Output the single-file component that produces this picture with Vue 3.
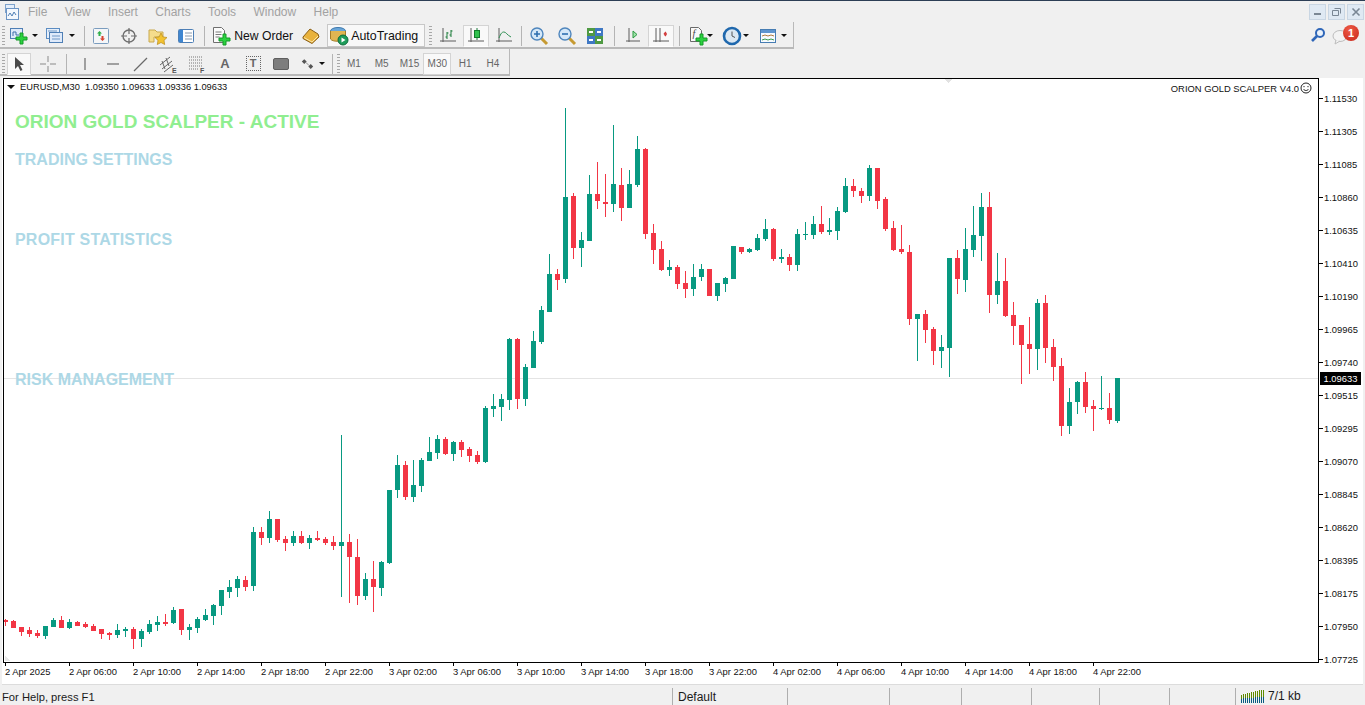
<script setup>
// candle rows: direction, body top, body bottom, wick top, wick bottom (screen y)
const rows = [
  ['r',620,622,619,626],['r',621,628,620,628],['r',627,632,627,636],['r',630,634,627,637],['r',633,636,630,638],
  ['g',626,636,626,639],['g',620,627,618,627],['r',620,628,616,628],['g',622,628,619,629],['r',622,626,621,626],
  ['r',624,627,622,628],['r',626,631,624,631],['r',629,634,629,639],['r',633,635,632,640],['g',630,635,624,638],
  ['g',629,631,627,637],['r',629,639,627,649],['g',631,639,629,647],['g',624,632,620,634],['g',622,625,616,631],
  ['r',622,624,614,626],['g',610,623,607,624],['r',609,630,609,635],['g',627,630,624,640],['g',619,628,617,633],
  ['g',615,620,609,621],['g',605,616,604,625],['g',590,606,590,615],['g',587,592,580,598],['g',579,588,576,597],
  ['r',580,587,576,591],['g',532,586,527,591],['r',532,538,527,545],['g',519,538,511,543],['r',519,540,519,542],
  ['r',539,543,536,551],['g',536,543,531,546],['r',536,543,531,544],['g',538,543,535,549],['r',538,540,531,541],
  ['r',539,543,537,545],['r',542,546,536,550],['g',542,546,435,597],['r',542,557,534,603],['r',557,596,539,605],
  ['g',579,596,573,600],['r',579,587,561,612],['g',562,588,561,596],['g',490,563,490,564],['g',465,490,455,498],
  ['r',465,497,461,500],['g',485,497,460,502],['g',460,486,458,492],['g',452,461,437,461],['g',439,453,435,459],
  ['r',439,454,437,455],['g',442,454,441,461],['r',442,450,440,457],['r',449,456,447,462],['r',455,462,451,464],
  ['g',408,462,406,463],['g',406,409,394,417],['g',399,407,394,421],['g',339,400,338,410],['r',339,399,338,409],
  ['g',367,399,364,406],['g',341,368,331,368],['g',310,342,306,344],['g',274,312,254,312],['r',274,280,269,290],
  ['g',197,279,108,283],['r',196,248,193,259],['g',240,248,232,267],['g',194,241,175,241],['r',194,201,162,209],
  ['r',202,204,174,217],['g',184,204,125,212],['r',185,208,168,221],['g',184,208,170,208],['g',149,185,136,187],
  ['r',149,234,148,239],['r',233,250,224,264],['r',249,270,241,271],['g',267,270,260,276],['r',267,284,265,289],
  ['r',283,289,271,298],['g',277,289,264,296],['g',269,277,264,281],['r',269,296,269,296],['g',283,296,283,301],
  ['g',278,284,277,292],['g',246,279,246,279],['r',247,252,247,254],['g',249,252,248,253],['g',238,250,234,251],
  ['g',229,239,219,241],['r',229,259,228,261],['g',257,259,249,263],['r',257,265,254,271],['g',234,265,229,271],
  ['g',234,235,222,240],['g',224,235,216,239],['r',224,232,206,234],['g',230,232,218,235],['g',211,231,207,240],
  ['g',186,212,178,213],['r',186,191,179,197],['r',191,196,188,203],['g',168,196,165,201],['r',168,201,168,209],
  ['r',199,229,197,231],['r',228,250,221,251],['r',249,252,225,254],['r',252,319,245,325],['g',314,319,314,361],
  ['r',314,330,310,343],['r',329,351,327,365],['g',347,351,335,368],['g',258,348,258,377],['r',258,279,250,294],
  ['g',249,280,228,292],['g',235,250,206,257],['g',207,236,193,261],['r',207,295,192,313],['g',281,295,253,304],
  ['r',281,316,258,317],['r',315,326,302,345],['r',325,345,325,384],['r',344,349,317,374],['g',303,349,299,370],
  ['r',303,348,295,363],['r',347,367,339,381],['r',366,426,358,436],['g',402,426,388,434],['g',382,402,381,414],
  ['r',382,407,372,413],['r',406,409,400,431],['g',408,409,376,410],['r',408,420,393,424],['g',378,421,378,423]
]

const candles = rows.map((r, i) => ({
  x: 5 + i * 8,
  fill: r[0] === 'g' ? '#089981' : '#f23645',
  top: r[1],
  bodyH: r[2] - r[1],
  wickTop: r[3],
  wickH: r[4] - r[3]
}))

const prices = ['1.11530','1.11305','1.11085','1.10860','1.10635','1.10410','1.10190','1.09965','1.09740','1.09515','1.09295','1.09070','1.08845','1.08620','1.08395','1.08175','1.07950','1.07725']

const times = ['2 Apr 2025','2 Apr 06:00','2 Apr 10:00','2 Apr 14:00','2 Apr 18:00','2 Apr 22:00','3 Apr 02:00','3 Apr 06:00','3 Apr 10:00','3 Apr 14:00','3 Apr 18:00','3 Apr 22:00','4 Apr 02:00','4 Apr 06:00','4 Apr 10:00','4 Apr 14:00','4 Apr 18:00','4 Apr 22:00']

const menus = ['File','View','Insert','Charts','Tools','Window','Help']
const periods = ['M1','M5','M15','M30','H1','H4']
const statusCells = [
  { w: 673, text: 'For Help, press F1' },
  { w: 115, text: 'Default' },
  { w: 102, text: '' },
  { w: 72, text: '' },
  { w: 70, text: '' },
  { w: 68, text: '' },
  { w: 70, text: '' },
  { w: 66, text: '' }
]
const meterBars = [8,9,9,10,10,11,11,12,12,13,13,13]
</script>

<template>
  <div class="app">
    <div class="menubar">
      <svg class="app-icon" width="18" height="18" viewBox="0 0 18 18">
        <rect x="3.5" y="1.5" width="9" height="8" fill="#e4eefa" stroke="#7fa3cc"/>
        <rect x="4.5" y="5.5" width="12" height="11" fill="#f4f8fd" stroke="#6d95c4"/>
        <path d="M6 13l2-3 2 3 2-4 2 3" fill="none" stroke="#4f7fb5"/>
      </svg>
      <span v-for="m in menus" :key="m" class="menu-item">{{ m }}</span>
      <div class="win-btns">
        <div class="win-btn"><span class="win-min"></span></div>
        <div class="win-btn">
          <svg width="11" height="11" viewBox="0 0 11 11"><path d="M3.5 2.5h6v5M1.5 4.5h6v5h-6z" fill="none" stroke="#7a8794"/></svg>
        </div>
        <div class="win-btn">
          <svg width="10" height="10" viewBox="0 0 10 10"><path d="M1.5 1.5l7 7M8.5 1.500l-7 7" stroke="#7a8794" stroke-width="1.6"/></svg>
        </div>
      </div>
    </div>

    <div class="toolbar-row first">
      <div class="toolbar bar-one">
        <span class="grip"></span>

        <div class="drop d1">
          <svg width="20" height="18" viewBox="0 0 20 18">
            <rect x="1.5" y="1.500" width="12" height="10" fill="#dfeafa" stroke="#4f7fb5"/>
            <path d="M4 9V5h3v3h3" fill="none" stroke="#3f6fa8"/>
            <path d="M11 6h3v4h4v3h-4v4h-3v-4H7v-3h4z" fill="#2bd23f" stroke="#149a28"/>
          </svg>
          <span class="caret"></span>
        </div>
        <div class="drop d2">
          <svg width="20" height="18" viewBox="0 0 20 18">
            <rect x="1.5" y="1.5" width="13" height="10" fill="#e6effa" stroke="#5b8cc2"/>
            <rect x="4.5" y="5.5" width="13" height="10" fill="#dfeafa" stroke="#4f7fb5"/>
            <path d="M3 4h9M7 9h8M7 12h8" stroke="#6f97c6"/>
          </svg>
          <span class="caret"></span>
        </div>
        <span class="sep s84"></span>

        <div class="tool t-nav first-nav">
          <svg width="18" height="18" viewBox="0 0 18 18">
            <rect x="1.5" y="1.500" width="15" height="15" rx="1" fill="#f4f6f8" stroke="#7b9dbf"/>
            <path d="M6.500 9V6.500H5l2.500-2.500L10 6.500H8.500V9z" fill="#2eae49"/>
            <path d="M9.500 9v2.500H8l2.500 2.500 2.500-2.500h-1.500V9z" fill="#d9432f"/>
          </svg>
        </div>
        <div class="tool t-nav">
          <svg width="18" height="18" viewBox="0 0 18 18">
            <circle cx="9" cy="9" r="6" fill="none" stroke="#6e6e6e" stroke-width="1.4"/>
            <path d="M9 1v6M9 11v6M1 9h6M11 9h6" stroke="#6e6e6e" stroke-width="1.2"/>
          </svg>
        </div>
        <div class="tool t-nav">
          <svg width="20" height="18" viewBox="0 0 20 18">
            <path d="M1 3h6l2 2h6v5H6v5H1z" fill="#f5dc8c" stroke="#c9a94e"/>
            <path d="M13 6l1.900 3.900 4.100.6-3 2.900.7 4.100-3.700-2-3.700 2 .7-4.100-3-2.900 4.100-.6z" fill="#f2c230" stroke="#b98a17" stroke-width=".7"/>
          </svg>
        </div>
        <div class="tool t-nav">
          <svg width="18" height="18" viewBox="0 0 18 18">
            <rect x="1.5" y="2.5" width="15" height="13" rx="1" fill="#fff" stroke="#4d7fb6"/>
            <rect x="2" y="3" width="4" height="12" fill="#3f86d0"/>
            <path d="M8 6h7M8 9h7M8 12h7" stroke="#8a9aac"/>
          </svg>
        </div>
        <span class="sep s204"></span>

        <div class="new-order">
          <svg width="20" height="20" viewBox="0 0 20 20">
            <path d="M1.5 1.500h8l3 3v12h-11z" fill="#fbfbfb" stroke="#6f6f6f"/>
            <path d="M3.500 6h6M3.500 8.500h6M3.500 11h4" stroke="#7a7a7a"/>
            <path d="M11 8h3v4h4v3h-4v4h-3v-4H7v-3h4z" fill="#2bd23f" stroke="#149a28"/>
          </svg>
          <span>New Order</span>
        </div>
        <div class="tool book">
          <svg width="18" height="18" viewBox="0 0 18 18">
            <path d="M1 10L8 2l8 5 1 3-7 6.500L1 11.500z" fill="#e9b23c" stroke="#8a5f17"/>
            <path d="M2 10.500l8 4.500 6-6" fill="none" stroke="#fbe6a5"/>
          </svg>
        </div>
        <div class="auto-trading">
          <svg width="20" height="20" viewBox="0 0 20 20">
            <ellipse cx="9" cy="5" rx="7.500" ry="3.500" fill="#6aa6d8" stroke="#3c78ae"/>
            <path d="M1.500 5v8c2 3 11 3 15 0V5" fill="#e0b552" stroke="#a37c26"/>
            <circle cx="14" cy="14" r="5" fill="#1d9c5a" stroke="#0d6d3a"/>
            <path d="M12.500 11.500v5l4-2.500z" fill="#fff"/>
          </svg>
          <span>AutoTrading</span>
        </div>
        <span class="grip g430"></span>

        <div class="tool">
          <svg width="18" height="18" viewBox="0 0 18 18">
            <path d="M4 1v14M1 14h16" stroke="#5c5c5c"/>
            <path d="M8 5v7M6.500 10H8M8 6h1.500M12 3v7M10.500 8H12M12 4h1.500" fill="none" stroke="#1c7d3a"/>
          </svg>
        </div>
        <div class="tool active cand">
          <svg width="18" height="18" viewBox="0 0 18 18">
            <path d="M4 1v14M1 14h16" stroke="#5c5c5c"/>
            <path d="M10 1v12" stroke="#1c7d3a"/>
            <rect x="7.500" y="3.500" width="5" height="7" fill="#30c24d" stroke="#0f7d2a"/>
          </svg>
        </div>
        <div class="tool">
          <svg width="18" height="18" viewBox="0 0 18 18">
            <path d="M4 1v14M1 14h16" stroke="#5c5c5c"/>
            <path d="M4 11c2-5 3-6 5-6s3 3 7 5" fill="none" stroke="#2f8f53"/>
          </svg>
        </div>
        <span class="sep s521"></span>

        <div class="tool">
          <svg width="20" height="20" viewBox="0 0 20 20">
            <path d="M12 12l6 6" stroke="#c69a32" stroke-width="3"/>
            <circle cx="8" cy="8" r="6" fill="#d5e8f8" stroke="#4f86bd" stroke-width="1.4"/>
            <path d="M8 5v6M5 8h6" stroke="#2e6fb0" stroke-width="1.6"/>
          </svg>
        </div>
        <div class="tool">
          <svg width="20" height="20" viewBox="0 0 20 20">
            <path d="M12 12l6 6" stroke="#c69a32" stroke-width="3"/>
            <circle cx="8" cy="8" r="6" fill="#d5e8f8" stroke="#4f86bd" stroke-width="1.4"/>
            <path d="M5 8h6" stroke="#2e6fb0" stroke-width="1.6"/>
          </svg>
        </div>
        <div class="tool">
          <svg width="18" height="18" viewBox="0 0 18 18">
            <rect x="1" y="1" width="8" height="8" fill="#4f9a43"/>
            <rect x="9" y="1" width="8" height="8" fill="#3f78c4"/>
            <rect x="1" y="9" width="8" height="8" fill="#3f78c4"/>
            <rect x="9" y="9" width="8" height="8" fill="#4f9a43"/>
            <path d="M3 5h4M11 5h4M3 13h4M11 13h4" stroke="#fff" stroke-width="2"/>
          </svg>
        </div>
        <span class="sep s613"></span>

        <div class="tool">
          <svg width="18" height="18" viewBox="0 0 18 18">
            <path d="M5 1v14M2 14h14" stroke="#5c5c5c"/>
            <path d="M9 4v7l4-3.500z" fill="#9fe2a8" stroke="#2c9a43"/>
          </svg>
        </div>
        <div class="tool active scroll">
          <svg width="18" height="18" viewBox="0 0 18 18">
            <path d="M4 1v14M1 14h16M8 1v14" stroke="#5c5c5c"/>
            <path d="M15 7h-3M12 7l2-2M12 7l2 2" stroke="#d23a3a" stroke-width="1.300" fill="none"/>
          </svg>
        </div>
        <span class="sep s678"></span>

        <div class="drop d3">
          <svg width="20" height="20" viewBox="0 0 20 20">
            <path d="M1.500 1.500h8l3 3v11h-11z" fill="#f8f8f8" stroke="#6a6a6a"/>
            <text x="3.500" y="11" class="fx">f</text>
            <path d="M11 8h3v4h4v3h-4v4h-3v-4H7v-3h4z" fill="#2bd23f" stroke="#149a28"/>
          </svg>
          <span class="caret"></span>
        </div>
        <div class="drop d4">
          <svg width="20" height="20" viewBox="0 0 20 20">
            <circle cx="10" cy="10" r="8" fill="#dce8f2" stroke="#1f68ad" stroke-width="2.600"/>
            <path d="M10 5.500V10l3 1.500" fill="none" stroke="#555"/>
          </svg>
          <span class="caret"></span>
        </div>
        <div class="drop d5">
          <svg width="18" height="18" viewBox="0 0 18 18">
            <rect x="1.500" y="2.500" width="15" height="13" fill="#f7fbff" stroke="#477db3"/>
            <rect x="2" y="3" width="14" height="3" fill="#5e95cf"/>
            <path d="M3 9l3-1 3 1 3-1 3 1" fill="none" stroke="#b17b3e"/>
            <path d="M3 13l3-1 3 1 3-1 3 1" fill="none" stroke="#3b9a4d"/>
          </svg>
          <span class="caret"></span>
        </div>
      </div>
      <div class="right-tools">
        <svg width="16" height="16" viewBox="0 0 16 16">
          <circle cx="10" cy="6" r="4" fill="#eaf2fb" stroke="#2f66b8" stroke-width="2"/>
          <path d="M7 9l-5 5" stroke="#2f66b8" stroke-width="2.600"/>
        </svg>
        <div class="bell">
          <svg width="18" height="16" viewBox="0 0 18 16">
            <ellipse cx="8" cy="7" rx="7" ry="5.500" fill="#f3f3f3" stroke="#bdbdbd"/>
            <path d="M4 11l-1 4 5-3" fill="#f3f3f3" stroke="#bdbdbd"/>
          </svg>
          <span class="badge">1</span>
        </div>
      </div>
    </div>

    <div class="toolbar-row second">
      <div class="toolbar bar-two">
        <span class="grip"></span>
        <div class="tool active arrow">
          <svg width="14" height="16" viewBox="0 0 14 16"><path d="M3 1v12l3-3 2.500 5 2-1-2.500-5H12z" fill="#4a4a4a"/></svg>
        </div>
        <div class="tool">
          <svg width="18" height="18" viewBox="0 0 18 18"><path d="M9 1v6M9 11v6M1 9h6M11 9h6" stroke="#8a8a8a"/></svg>
        </div>
        <span class="sep s66"></span>
        <div class="tool">
          <svg width="18" height="18" viewBox="0 0 18 18"><path d="M9 3v12" stroke="#6a6a6a" stroke-width="1.200"/></svg>
        </div>
        <div class="tool">
          <svg width="18" height="18" viewBox="0 0 18 18"><path d="M3 9h12" stroke="#6a6a6a" stroke-width="1.200"/></svg>
        </div>
        <div class="tool">
          <svg width="18" height="18" viewBox="0 0 18 18"><path d="M2 16L15 3" stroke="#6a6a6a" stroke-width="1.200"/></svg>
        </div>
        <div class="tool">
          <svg width="20" height="20" viewBox="0 0 20 20">
            <path d="M1 11l10-8M3 15l10-8M5 18l9-7M3 7l3 8M7 4l3 8" stroke="#666" fill="none"/>
            <text x="13" y="19" class="mini">E</text>
          </svg>
        </div>
        <div class="tool">
          <svg width="20" height="20" viewBox="0 0 20 20">
            <path d="M2 3h14M2 6h14M2 9h14M2 12h14M2 15h10" stroke="#777" stroke-dasharray="1 1"/>
            <text x="13" y="19" class="mini">F</text>
          </svg>
        </div>
        <div class="tool"><span class="big-a">A</span></div>
        <div class="tool">
          <div class="text-box">T</div>
        </div>
        <div class="tool">
          <svg width="16" height="12" viewBox="0 0 16 12"><rect x=".5" y=".5" width="15" height="11" rx="1.500" fill="#7d7d7d" stroke="#5f5f5f"/></svg>
        </div>
        <div class="drop d6">
          <svg width="16" height="14" viewBox="0 0 16 14">
            <path d="M1 4l3-3 3 3-3 3zM9 10l3-3 3 3-3 3z" fill="#555"/>
            <path d="M6 5l4 4" stroke="#777"/>
          </svg>
          <span class="caret"></span>
        </div>
        <span class="sep s332"></span>
        <span class="grip g337"></span>
        <div class="periods">
          <span v-for="p in periods" :key="p" class="period" :class="{ on: p === 'M30' }">{{ p }}</span>
        </div>
      </div>
    </div>

    <div class="workspace">
      <div class="chart">
        <div class="plot">
          <svg class="candles" width="1315" height="583" viewBox="4 79 1315 583" shape-rendering="crispEdges">
            <rect x="4" y="378" width="1315" height="1" fill="#e4e4e4"/>
            <path d="M945 79h7l-3.500 4z" fill="#e2e2e2"/>
            <path d="M5 656l5 5H5z" fill="#e8e8e8"/>
            <g v-for="c in candles" :key="c.x" :fill="c.fill">
              <rect :x="c.x" :y="c.wickTop" width="1" :height="c.wickH"/>
              <rect :x="c.x - 2" :y="c.top" width="5" :height="c.bodyH"/>
            </g>
          </svg>

          <div class="symbol-info">
            <span class="tri"></span>
            <span>EURUSD,M30&nbsp; 1.09350 1.09633 1.09336 1.09633</span>
          </div>
          <div class="ea-name">
            <span>ORION GOLD SCALPER V4.0</span>
            <svg width="12" height="12" viewBox="0 0 12 12">
              <circle cx="6" cy="6" r="5" fill="none" stroke="#222"/>
              <path d="M3.500 7c1 2 4 2 5 0" fill="none" stroke="#222"/>
              <path d="M4 4v1.200M8 4v1.200" stroke="#222"/>
            </svg>
          </div>
          <div class="label l-active">ORION GOLD SCALPER - ACTIVE</div>
          <div class="label l-trade">TRADING SETTINGS</div>
          <div class="label l-profit">PROFIT STATISTICS</div>
          <div class="label l-risk">RISK MANAGEMENT</div>
        </div>

        <div class="price-axis">
          <div v-for="p in prices" :key="p" class="price">{{ p }}</div>
          <div class="price-tag">1.09633</div>
        </div>

        <div class="time-axis">
          <div v-for="t in times" :key="t" class="time">{{ t }}</div>
        </div>
      </div>
    </div>

    <div class="statusbar">
      <div v-for="(s, i) in statusCells" :key="i" class="cell" :style="{ width: s.w + 'px' }">{{ s.text }}</div>
      <div class="cell net">
        <div class="meter">
          <span v-for="(h, i) in meterBars" :key="i" :style="{ height: h + 'px' }"></span>
        </div>
        <span>7/1 kb</span>
      </div>
    </div>
  </div>
</template>

<style scoped>
.app {
  width: 1365px;
  height: 705px;
  overflow: hidden;
  background: #f0f0f0;
  color: #1a1a1a;
  font-family: "Liberation Sans", Arial, sans-serif;
  font-size: 12px;
  display: flex;
  flex-direction: column;
}

.menubar {
  height: 22px;
  box-sizing: border-box;
  border-top: 1px solid #2c3e55;
  display: flex;
  align-items: center;
  flex: none;
  position: relative;
  padding-left: 2px;
}
.app-icon { margin: 0 8px 0 0; flex: none; }
.menu-item {
  color: #a2a2a2;
  font-size: 12px;
  margin-right: 17.4px;
}
.win-btns {
  margin-left: auto;
  margin-right: 1px;
  display: flex;
  gap: 2px;
}
.win-btn {
  width: 17px;
  height: 16px;
  box-sizing: border-box;
  border: 1px solid #c9d6e3;
  background: #dfe9f3;
  display: flex;
  align-items: center;
  justify-content: center;
}
.win-min {
  width: 7px;
  height: 2px;
  margin-top: 5px;
  background: #7a8794;
}

.toolbar-row {
  display: flex;
  flex: none;
  justify-content: space-between;
}
.toolbar-row.first { height: 27px; }
.toolbar-row.second { height: 27px; }

.toolbar {
  display: flex;
  align-items: center;
  box-sizing: border-box;
  border-bottom: 2px solid #b9b9b9;
  border-right: 1px solid #b9b9b9;
}
.bar-one { width: 794px; height: 27px; padding-top: 2px; }
.bar-two { width: 510px; height: 27px; padding-top: 4px; }

.grip {
  width: 3px;
  height: 20px;
  margin: 0 1px 0 2px;
  flex: none;
  background: repeating-linear-gradient(#a8a8a8 0 1px, transparent 1px 3px);
}
.g430 { margin: 0 2px 0 4px; }
.g337 { margin: 0 0 0 4px; }

.tool {
  width: 28px;
  height: 22px;
  flex: none;
  display: flex;
  align-items: center;
  justify-content: center;
  box-sizing: border-box;
}
.t-nav { width: 28.3px; }
.first-nav { margin-left: 2px; }
.tool.active {
  background: #f9f9f9;
  border: 1px solid #d4d4d4;
  border-bottom-color: #fff;
}
.cand { width: 26px; margin: 0 1px; }
.scroll { width: 26px; margin: 0 1px; }
.arrow { width: 24px; margin: 0 3px 0 1px; height: 22px; }

.drop {
  display: flex;
  align-items: center;
  flex: none;
  height: 22px;
  box-sizing: border-box;
}
.d1 { width: 38px; padding-left: 3px; gap: 3px; }
.d2 { width: 36px; padding-left: 1px; gap: 4px; }
.d3 { width: 36px; padding-left: 5px; gap: 0; margin-left: 4px; }
.d3 .caret { margin-left: -2px; }
.d4 { width: 37px; padding-left: 2px; gap: 1px; }
.d5 { width: 36px; padding-left: 2px; gap: 4px; }
.d6 { width: 28px; padding-left: 4px; gap: 5px; margin-left: 2px; }
.caret {
  width: 0;
  height: 0;
  border-left: 3px solid transparent;
  border-right: 3px solid transparent;
  border-top: 3px solid #111;
  flex: none;
}

.sep {
  width: 1px;
  height: 20px;
  background: #b4b4b4;
  flex: none;
}
.s84 { margin-left: 4px; }
.s204 { margin-left: 4px; }
.s521 { margin: 0 3px 0 3px; }
.s613 { margin: 0 4px 0 5px; }
.s678 { margin: 0 0 0 4px; }
.s66 { margin: 0 4px 0 4px; }
.s332 { margin-left: 7px; }

.new-order {
  display: flex;
  align-items: center;
  gap: 2px;
  padding-left: 7px;
  width: 92px;
  box-sizing: border-box;
  flex: none;
  font-size: 12.2px;
  color: #111;
}
.book { margin-left: 0; }
.auto-trading {
  width: 98px;
  height: 23px;
  margin-left: 2px;
  flex: none;
  box-sizing: border-box;
  border: 1px solid #c8c8c8;
  background: #f8f8f8;
  display: flex;
  align-items: center;
  gap: 2px;
  padding-left: 1px;
  font-size: 12.4px;
  color: #111;
}

.fx {
  font-family: "Liberation Serif", serif;
  font-style: italic;
  font-size: 10px;
  fill: #444;
}
.mini {
  font-size: 7px;
  font-weight: 700;
  fill: #555;
}
.big-a {
  font-weight: 700;
  font-size: 13px;
  color: #666;
}
.text-box {
  width: 13px;
  height: 13px;
  border: 1px dotted #666;
  font-size: 11px;
  font-weight: 700;
  line-height: 13px;
  color: #666;
  text-align: center;
}

.periods { display: flex; align-items: center; }
.period {
  width: 27.8px;
  height: 22px;
  line-height: 22px;
  text-align: center;
  font-size: 10px;
  color: #666;
  box-sizing: border-box;
}
.period.on {
  background: #f9f9f9;
  border: 1px solid #d4d4d4;
  line-height: 20px;
}

.right-tools {
  display: flex;
  align-items: center;
  gap: 6px;
  padding-right: 11px;
  height: 26px;
}
.bell { position: relative; width: 22px; height: 20px; padding-top: 4px; box-sizing: border-box; }
.badge {
  position: absolute;
  top: 0;
  right: -5px;
  width: 16px;
  height: 16px;
  border-radius: 50%;
  background: radial-gradient(circle at 40% 30%, #ee5a45, #c8261a);
  color: #fff;
  font-size: 11px;
  font-weight: 700;
  line-height: 16px;
  text-align: center;
}

.workspace {
  height: 608px;
  flex: none;
  box-sizing: border-box;
  padding: 2px 2px 0 2px;
}
.chart {
  height: 606px;
  background: #fff;
  display: grid;
  grid-template-columns: 1316px 1fr;
  grid-template-rows: 585px 1fr;
  border-bottom: 1px solid #dcdcdc;
  padding-left: 1px;
  font-size: 9.4px;
}

.plot {
  grid-column: 1;
  grid-row: 1;
  position: relative;
  border: 1px solid #000;
  box-sizing: border-box;
  overflow: hidden;
}
.candles { display: block; }

.symbol-info {
  position: absolute;
  left: 3px;
  top: 3px;
  display: flex;
  align-items: center;
  gap: 5px;
  color: #111;
  font-size: 9.3px;
}
.tri {
  width: 0;
  height: 0;
  border-left: 4px solid transparent;
  border-right: 4px solid transparent;
  border-top: 4px solid #111;
}
.ea-name {
  position: absolute;
  right: 6px;
  top: 3px;
  display: flex;
  align-items: center;
  gap: 1px;
  font-size: 9.4px;
  color: #111;
}

.label {
  position: absolute;
  left: 11px;
  font-weight: 700;
  white-space: nowrap;
  line-height: 1;
}
.l-active { top: 33px; font-size: 19px; color: #90ee90; }
.l-trade { top: 73px; font-size: 16px; color: #add8e6; }
.l-profit { top: 153px; font-size: 16px; color: #add8e6; letter-spacing: .2px; }
.l-risk { top: 293px; font-size: 16px; color: #add8e6; }

.price-axis {
  grid-column: 2;
  grid-row: 1 / span 2;
  position: relative;
  padding-top: 3.5px;
}
.price {
  height: 33px;
  display: flex;
  align-items: center;
  padding-left: 5px;
  position: relative;
  color: #111;
}
.price::before {
  content: "";
  position: absolute;
  left: 0;
  top: 16px;
  width: 4px;
  height: 1px;
  background: #000;
}
.price-tag {
  position: absolute;
  left: 1px;
  top: 294px;
  width: 41px;
  height: 13px;
  background: #000;
  color: #fff;
  text-align: center;
  line-height: 13px;
  font-size: 9.4px;
}

.time-axis {
  grid-column: 1;
  grid-row: 2;
  display: flex;
  padding-left: 2px;
}
.time {
  width: 64px;
  flex: none;
  position: relative;
  padding-top: 3px;
  white-space: nowrap;
  color: #111;
}
.time::before {
  content: "";
  position: absolute;
  left: 0;
  top: 0;
  width: 1px;
  height: 3px;
  background: #000;
}

.statusbar {
  flex: 1;
  display: flex;
  align-items: flex-end;
}
.cell {
  height: 17px;
  line-height: 19px;
  padding-left: 5px;
  box-sizing: border-box;
  flex: none;
  border-right: 1px solid #aeaeae;
  white-space: nowrap;
}
.cell:first-child { padding-left: 2px; font-size: 11.2px; }
.net {
  border-right: 0;
  display: flex;
  align-items: center;
  gap: 3px;
}
.meter {
  width: 24px;
  height: 13px;
  display: flex;
  align-items: flex-end;
  gap: 1px;
}
.meter span {
  width: 1px;
  background: linear-gradient(#5f8a00 50%, #0a5a80 50%);
}
</style>

<style>
body { background: #f0f0f0; }
</style>
